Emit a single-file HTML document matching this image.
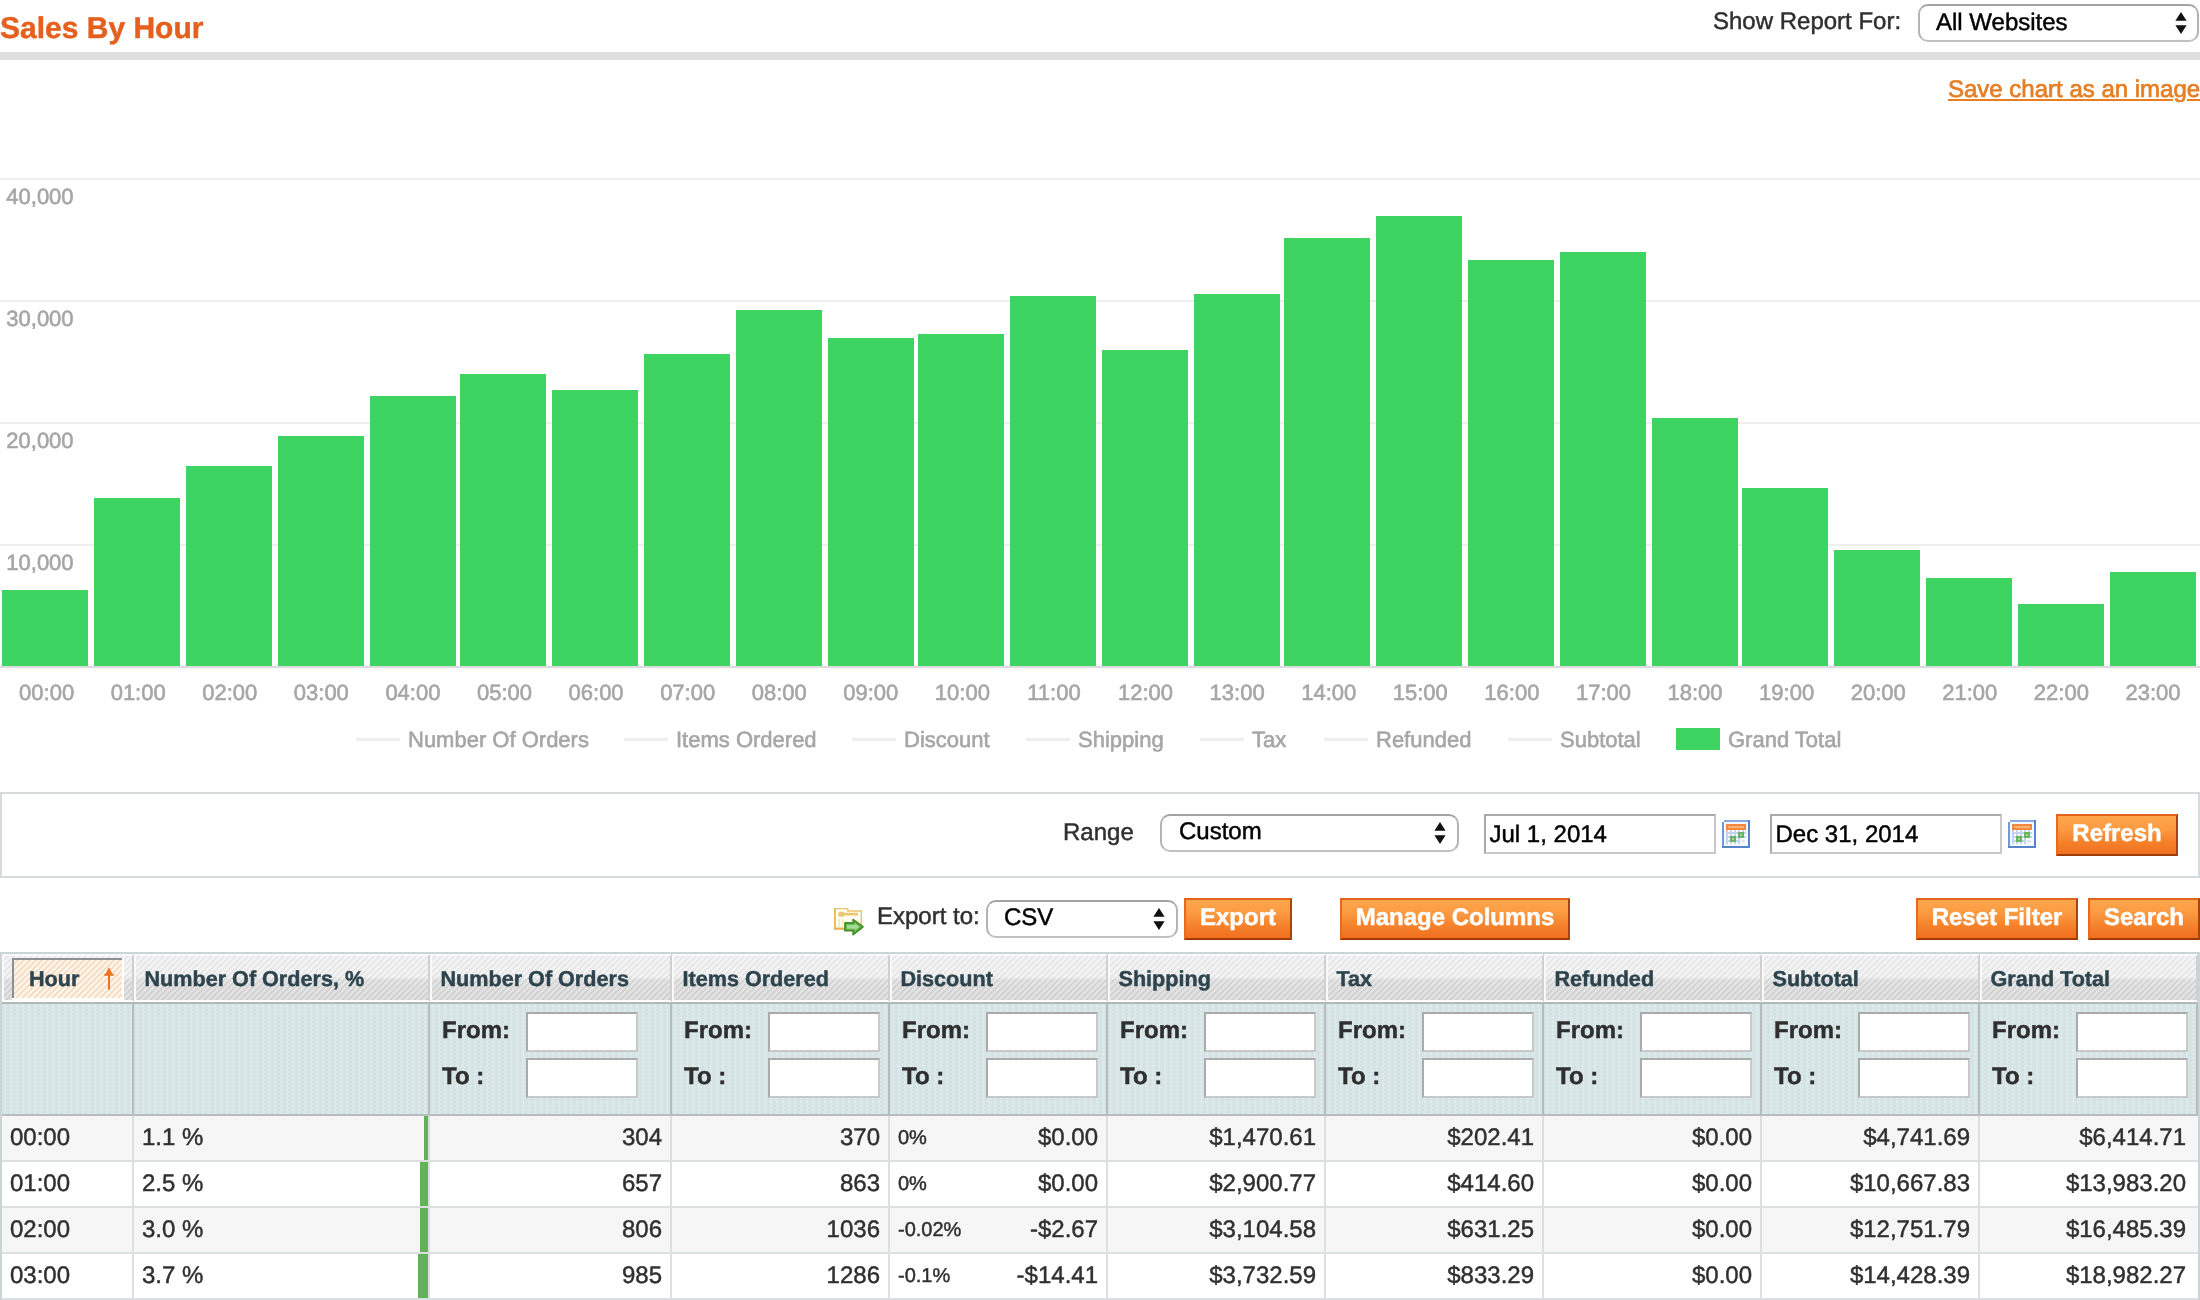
<!DOCTYPE html>
<html><head><meta charset="utf-8"><title>Sales By Hour</title><style>
html,body{margin:0;padding:0;background:#fff;}
body{width:2200px;height:1300px;position:relative;overflow:hidden;font-family:"Liberation Sans", sans-serif;will-change:transform;}
.b{position:absolute;box-sizing:border-box;}
.t{position:absolute;white-space:nowrap;font-family:"Liberation Sans", sans-serif;text-rendering:geometricPrecision;}
.sel{border:2px solid;border-color:#a3a3a3 #b3b3b3 #c1c1c1 #b3b3b3;border-radius:10px;background:#fff;}
.inp{border:2px solid;border-color:#aaa #c8c8c8 #c8c8c8 #aaa;background:#fff;}
.btn{border:2px solid;border-color:#e0651a #a8450c #9c3d06 #e96a1c;background:linear-gradient(#fea64d 0%,#fb9a41 35%,#f5802a 70%,#f16f1f 100%);}
.th{border:2px solid;border-color:#f9f9f9 #d1cfcf #ffffff #f9f9f9;
 background:
  linear-gradient(rgba(255,255,255,.3) 0,rgba(255,255,255,.3) 47%,rgba(0,0,0,.04) 55%,rgba(0,0,0,.06) 100%),
  repeating-linear-gradient(135deg,#efefef 0,#efefef 1.7px,#dddddd 2.3px,#dddddd 3.65px,#efefef 4.243px);}
.sorted{border:0;
 background:repeating-linear-gradient(135deg,#fff5e9 0,#fff5e9 1.7px,#f5ddc5 2.3px,#f5ddc5 3.65px,#fff5e9 4.243px);}
.fl{border:2px solid;border-color:#b2b8b8 #b7bdbd #b7bdbd #d9e7ea;border-left-width:0;background:radial-gradient(circle at 3px 2px,rgba(232,242,244,.55) 0,rgba(232,242,244,.55) 0.9px,transparent 1.5px) 0 0/6px 4px,repeating-linear-gradient(90deg,rgba(200,216,220,.28) 0,rgba(200,216,220,.28) 1px,transparent 1px,transparent 6px),#d7e5e7;}
.td{border-right:2px solid #dadfe0;border-bottom:2px solid #dadfe0;}
</style></head><body>
<svg width="0" height="0" style="position:absolute"><defs><filter id="soft" x="-10%" y="-10%" width="120%" height="120%"><feGaussianBlur stdDeviation="0.33"/></filter><filter id="soft2" x="-10%" y="-10%" width="120%" height="120%"><feGaussianBlur stdDeviation="0.55"/></filter></defs></svg>
<div class="t" style="left:0px;top:13.71px;font-size:30px;line-height:30px;color:#e5601e;-webkit-text-stroke:0.45px #e5601e;font-weight:bold;">Sales By Hour</div>
<div class="t" style="left:1713px;top:10.28px;font-size:24px;line-height:24px;color:#2f2f2f;-webkit-text-stroke:0.45px #2f2f2f;">Show Report For:</div>
<div class="b sel" style="left:1918px;top:4px;width:281px;height:38px;"></div>
<div class="t" style="left:1936px;top:10.68px;font-size:24px;line-height:24px;color:#000;-webkit-text-stroke:0.45px #000;">All Websites</div>
<svg class="b" style="left:2173.5px;top:11.0px" width="14" height="24" viewBox="0 0 14 24"><path d="M7 1 L12.6 9.8 L1.4 9.8 Z M7 23 L12.6 14.2 L1.4 14.2 Z" fill="#111"/></svg>
<div class="b" style="left:0px;top:52px;width:2200px;height:8px;background:#dfdfdf;"></div>
<div class="t" style="left:1948px;top:77.88px;font-size:24px;line-height:24px;color:#e67e24;-webkit-text-stroke:0.7px #e67e24;text-decoration:underline;text-decoration-thickness:2px;text-underline-offset:1.5px;">Save chart as an image</div>
<div class="b" style="left:0px;top:178px;width:2200px;height:2px;background:#eeeeee;"></div>
<div class="b" style="left:0px;top:300px;width:2200px;height:2px;background:#eeeeee;"></div>
<div class="b" style="left:0px;top:422px;width:2200px;height:2px;background:#eeeeee;"></div>
<div class="b" style="left:0px;top:544px;width:2200px;height:2px;background:#eeeeee;"></div>
<div class="t" style="left:6.3px;top:185.88px;font-size:22px;line-height:22px;color:#a6a6a6;-webkit-text-stroke:0.6px #a6a6a6;transform:scaleY(1.0);transform-origin:0 84.65%;">40,000</div>
<div class="t" style="left:6.3px;top:307.88px;font-size:22px;line-height:22px;color:#a6a6a6;-webkit-text-stroke:0.6px #a6a6a6;transform:scaleY(1.0);transform-origin:0 84.65%;">30,000</div>
<div class="t" style="left:6.3px;top:429.88px;font-size:22px;line-height:22px;color:#a6a6a6;-webkit-text-stroke:0.6px #a6a6a6;transform:scaleY(1.0);transform-origin:0 84.65%;">20,000</div>
<div class="t" style="left:6.3px;top:551.88px;font-size:22px;line-height:22px;color:#a6a6a6;-webkit-text-stroke:0.6px #a6a6a6;transform:scaleY(1.0);transform-origin:0 84.65%;">10,000</div>
<div class="b" style="left:2px;top:590px;width:86px;height:76px;background:#3dd461;"></div>
<div class="b" style="left:94px;top:498px;width:86px;height:168px;background:#3dd461;"></div>
<div class="b" style="left:186px;top:466px;width:86px;height:200px;background:#3dd461;"></div>
<div class="b" style="left:278px;top:436px;width:86px;height:230px;background:#3dd461;"></div>
<div class="b" style="left:370px;top:396px;width:86px;height:270px;background:#3dd461;"></div>
<div class="b" style="left:460px;top:374px;width:86px;height:292px;background:#3dd461;"></div>
<div class="b" style="left:552px;top:390px;width:86px;height:276px;background:#3dd461;"></div>
<div class="b" style="left:644px;top:354px;width:86px;height:312px;background:#3dd461;"></div>
<div class="b" style="left:736px;top:310px;width:86px;height:356px;background:#3dd461;"></div>
<div class="b" style="left:828px;top:338px;width:86px;height:328px;background:#3dd461;"></div>
<div class="b" style="left:918px;top:334px;width:86px;height:332px;background:#3dd461;"></div>
<div class="b" style="left:1010px;top:296px;width:86px;height:370px;background:#3dd461;"></div>
<div class="b" style="left:1102px;top:350px;width:86px;height:316px;background:#3dd461;"></div>
<div class="b" style="left:1194px;top:294px;width:86px;height:372px;background:#3dd461;"></div>
<div class="b" style="left:1284px;top:238px;width:86px;height:428px;background:#3dd461;"></div>
<div class="b" style="left:1376px;top:216px;width:86px;height:450px;background:#3dd461;"></div>
<div class="b" style="left:1468px;top:260px;width:86px;height:406px;background:#3dd461;"></div>
<div class="b" style="left:1560px;top:252px;width:86px;height:414px;background:#3dd461;"></div>
<div class="b" style="left:1652px;top:418px;width:86px;height:248px;background:#3dd461;"></div>
<div class="b" style="left:1742px;top:488px;width:86px;height:178px;background:#3dd461;"></div>
<div class="b" style="left:1834px;top:550px;width:86px;height:116px;background:#3dd461;"></div>
<div class="b" style="left:1926px;top:578px;width:86px;height:88px;background:#3dd461;"></div>
<div class="b" style="left:2018px;top:604px;width:86px;height:62px;background:#3dd461;"></div>
<div class="b" style="left:2110px;top:572px;width:86px;height:94px;background:#3dd461;"></div>
<div class="b" style="left:0px;top:666px;width:2200px;height:2px;background:#dcdcdc;"></div>
<div class="t" style="left:6.600000000000001px;top:682.38px;font-size:22px;line-height:22px;color:#a6a6a6;-webkit-text-stroke:0.6px #a6a6a6;width:80px;text-align:center;transform:scaleY(1.0);transform-origin:0 84.65%;">00:00</div>
<div class="t" style="left:98.18px;top:682.38px;font-size:22px;line-height:22px;color:#a6a6a6;-webkit-text-stroke:0.6px #a6a6a6;width:80px;text-align:center;transform:scaleY(1.0);transform-origin:0 84.65%;">01:00</div>
<div class="t" style="left:189.76px;top:682.38px;font-size:22px;line-height:22px;color:#a6a6a6;-webkit-text-stroke:0.6px #a6a6a6;width:80px;text-align:center;transform:scaleY(1.0);transform-origin:0 84.65%;">02:00</div>
<div class="t" style="left:281.34000000000003px;top:682.38px;font-size:22px;line-height:22px;color:#a6a6a6;-webkit-text-stroke:0.6px #a6a6a6;width:80px;text-align:center;transform:scaleY(1.0);transform-origin:0 84.65%;">03:00</div>
<div class="t" style="left:372.92px;top:682.38px;font-size:22px;line-height:22px;color:#a6a6a6;-webkit-text-stroke:0.6px #a6a6a6;width:80px;text-align:center;transform:scaleY(1.0);transform-origin:0 84.65%;">04:00</div>
<div class="t" style="left:464.5px;top:682.38px;font-size:22px;line-height:22px;color:#a6a6a6;-webkit-text-stroke:0.6px #a6a6a6;width:80px;text-align:center;transform:scaleY(1.0);transform-origin:0 84.65%;">05:00</div>
<div class="t" style="left:556.08px;top:682.38px;font-size:22px;line-height:22px;color:#a6a6a6;-webkit-text-stroke:0.6px #a6a6a6;width:80px;text-align:center;transform:scaleY(1.0);transform-origin:0 84.65%;">06:00</div>
<div class="t" style="left:647.66px;top:682.38px;font-size:22px;line-height:22px;color:#a6a6a6;-webkit-text-stroke:0.6px #a6a6a6;width:80px;text-align:center;transform:scaleY(1.0);transform-origin:0 84.65%;">07:00</div>
<div class="t" style="left:739.24px;top:682.38px;font-size:22px;line-height:22px;color:#a6a6a6;-webkit-text-stroke:0.6px #a6a6a6;width:80px;text-align:center;transform:scaleY(1.0);transform-origin:0 84.65%;">08:00</div>
<div class="t" style="left:830.82px;top:682.38px;font-size:22px;line-height:22px;color:#a6a6a6;-webkit-text-stroke:0.6px #a6a6a6;width:80px;text-align:center;transform:scaleY(1.0);transform-origin:0 84.65%;">09:00</div>
<div class="t" style="left:922.4px;top:682.38px;font-size:22px;line-height:22px;color:#a6a6a6;-webkit-text-stroke:0.6px #a6a6a6;width:80px;text-align:center;transform:scaleY(1.0);transform-origin:0 84.65%;">10:00</div>
<div class="t" style="left:1013.98px;top:682.38px;font-size:22px;line-height:22px;color:#a6a6a6;-webkit-text-stroke:0.6px #a6a6a6;width:80px;text-align:center;transform:scaleY(1.0);transform-origin:0 84.65%;">11:00</div>
<div class="t" style="left:1105.56px;top:682.38px;font-size:22px;line-height:22px;color:#a6a6a6;-webkit-text-stroke:0.6px #a6a6a6;width:80px;text-align:center;transform:scaleY(1.0);transform-origin:0 84.65%;">12:00</div>
<div class="t" style="left:1197.1399999999999px;top:682.38px;font-size:22px;line-height:22px;color:#a6a6a6;-webkit-text-stroke:0.6px #a6a6a6;width:80px;text-align:center;transform:scaleY(1.0);transform-origin:0 84.65%;">13:00</div>
<div class="t" style="left:1288.7199999999998px;top:682.38px;font-size:22px;line-height:22px;color:#a6a6a6;-webkit-text-stroke:0.6px #a6a6a6;width:80px;text-align:center;transform:scaleY(1.0);transform-origin:0 84.65%;">14:00</div>
<div class="t" style="left:1380.3px;top:682.38px;font-size:22px;line-height:22px;color:#a6a6a6;-webkit-text-stroke:0.6px #a6a6a6;width:80px;text-align:center;transform:scaleY(1.0);transform-origin:0 84.65%;">15:00</div>
<div class="t" style="left:1471.8799999999999px;top:682.38px;font-size:22px;line-height:22px;color:#a6a6a6;-webkit-text-stroke:0.6px #a6a6a6;width:80px;text-align:center;transform:scaleY(1.0);transform-origin:0 84.65%;">16:00</div>
<div class="t" style="left:1563.4599999999998px;top:682.38px;font-size:22px;line-height:22px;color:#a6a6a6;-webkit-text-stroke:0.6px #a6a6a6;width:80px;text-align:center;transform:scaleY(1.0);transform-origin:0 84.65%;">17:00</div>
<div class="t" style="left:1655.04px;top:682.38px;font-size:22px;line-height:22px;color:#a6a6a6;-webkit-text-stroke:0.6px #a6a6a6;width:80px;text-align:center;transform:scaleY(1.0);transform-origin:0 84.65%;">18:00</div>
<div class="t" style="left:1746.62px;top:682.38px;font-size:22px;line-height:22px;color:#a6a6a6;-webkit-text-stroke:0.6px #a6a6a6;width:80px;text-align:center;transform:scaleY(1.0);transform-origin:0 84.65%;">19:00</div>
<div class="t" style="left:1838.1999999999998px;top:682.38px;font-size:22px;line-height:22px;color:#a6a6a6;-webkit-text-stroke:0.6px #a6a6a6;width:80px;text-align:center;transform:scaleY(1.0);transform-origin:0 84.65%;">20:00</div>
<div class="t" style="left:1929.78px;top:682.38px;font-size:22px;line-height:22px;color:#a6a6a6;-webkit-text-stroke:0.6px #a6a6a6;width:80px;text-align:center;transform:scaleY(1.0);transform-origin:0 84.65%;">21:00</div>
<div class="t" style="left:2021.3600000000001px;top:682.38px;font-size:22px;line-height:22px;color:#a6a6a6;-webkit-text-stroke:0.6px #a6a6a6;width:80px;text-align:center;transform:scaleY(1.0);transform-origin:0 84.65%;">22:00</div>
<div class="t" style="left:2112.94px;top:682.38px;font-size:22px;line-height:22px;color:#a6a6a6;-webkit-text-stroke:0.6px #a6a6a6;width:80px;text-align:center;transform:scaleY(1.0);transform-origin:0 84.65%;">23:00</div>
<div class="b" style="left:356px;top:738px;width:44px;height:3px;background:#eeeeee;"></div>
<div class="t" style="left:408px;top:729.18px;font-size:22px;line-height:22px;color:#a6a6a6;-webkit-text-stroke:0.6px #a6a6a6;transform:scaleY(1.0);transform-origin:0 84.65%;">Number Of Orders</div>
<div class="b" style="left:624px;top:738px;width:44px;height:3px;background:#eeeeee;"></div>
<div class="t" style="left:676px;top:729.18px;font-size:22px;line-height:22px;color:#a6a6a6;-webkit-text-stroke:0.6px #a6a6a6;transform:scaleY(1.0);transform-origin:0 84.65%;">Items Ordered</div>
<div class="b" style="left:852px;top:738px;width:44px;height:3px;background:#eeeeee;"></div>
<div class="t" style="left:904px;top:729.18px;font-size:22px;line-height:22px;color:#a6a6a6;-webkit-text-stroke:0.6px #a6a6a6;transform:scaleY(1.0);transform-origin:0 84.65%;">Discount</div>
<div class="b" style="left:1026px;top:738px;width:44px;height:3px;background:#eeeeee;"></div>
<div class="t" style="left:1078px;top:729.18px;font-size:22px;line-height:22px;color:#a6a6a6;-webkit-text-stroke:0.6px #a6a6a6;transform:scaleY(1.0);transform-origin:0 84.65%;">Shipping</div>
<div class="b" style="left:1200px;top:738px;width:44px;height:3px;background:#eeeeee;"></div>
<div class="t" style="left:1252px;top:729.18px;font-size:22px;line-height:22px;color:#a6a6a6;-webkit-text-stroke:0.6px #a6a6a6;transform:scaleY(1.0);transform-origin:0 84.65%;">Tax</div>
<div class="b" style="left:1324px;top:738px;width:44px;height:3px;background:#eeeeee;"></div>
<div class="t" style="left:1376px;top:729.18px;font-size:22px;line-height:22px;color:#a6a6a6;-webkit-text-stroke:0.6px #a6a6a6;transform:scaleY(1.0);transform-origin:0 84.65%;">Refunded</div>
<div class="b" style="left:1508px;top:738px;width:44px;height:3px;background:#eeeeee;"></div>
<div class="t" style="left:1560px;top:729.18px;font-size:22px;line-height:22px;color:#a6a6a6;-webkit-text-stroke:0.6px #a6a6a6;transform:scaleY(1.0);transform-origin:0 84.65%;">Subtotal</div>
<div class="b" style="left:1676px;top:728px;width:44px;height:22px;background:#3dd461;"></div>
<div class="t" style="left:1728px;top:729.18px;font-size:22px;line-height:22px;color:#a6a6a6;-webkit-text-stroke:0.6px #a6a6a6;transform:scaleY(1.0);transform-origin:0 84.65%;">Grand Total</div>
<div class="b" style="left:0px;top:792px;width:2200px;height:86px;box-sizing:border-box;border:2px solid #d6dcdc;background:#fff;"></div>
<div class="t" style="left:1063px;top:820.88px;font-size:24px;line-height:24px;color:#2f2f2f;-webkit-text-stroke:0.45px #2f2f2f;">Range</div>
<div class="b sel" style="left:1160px;top:814px;width:299px;height:38px;"></div>
<div class="t" style="left:1179px;top:820.28px;font-size:24px;line-height:24px;color:#000;-webkit-text-stroke:0.45px #000;">Custom</div>
<svg class="b" style="left:1433.4px;top:821.0px" width="14" height="24" viewBox="0 0 14 24"><path d="M7 1 L12.6 9.8 L1.4 9.8 Z M7 23 L12.6 14.2 L1.4 14.2 Z" fill="#111"/></svg>
<div class="b inp" style="left:1484px;top:814px;width:232px;height:40px;"></div>
<div class="t" style="left:1489.5px;top:822.58px;font-size:24px;line-height:24px;color:#000;-webkit-text-stroke:0.45px #000;">Jul 1, 2014</div>
<div class="b inp" style="left:1770px;top:814px;width:232px;height:40px;"></div>
<div class="t" style="left:1775.5px;top:822.58px;font-size:24px;line-height:24px;color:#000;-webkit-text-stroke:0.45px #000;">Dec 31, 2014</div>
<svg class="b" style="left:1722px;top:820px" width="28" height="28" viewBox="0 0 14 14">
<g filter="url(#soft)">
<rect x="1" y="0" width="13" height="14" fill="#86abe0"/>
<rect x="0" y="1" width="14" height="13" fill="#6f9bdb"/>
<rect x="13" y="0" width="1" height="14" fill="#5a84c8"/>
<rect x="0" y="13" width="14" height="1" fill="#5885ca"/>
<rect x="1" y="1" width="12" height="12" fill="#f4f8fe"/>
<rect x="2" y="2" width="10" height="3" fill="#f4873c"/>
<rect x="3" y="3" width="8" height="1" fill="#fdb375"/>
<rect x="2" y="5" width="10" height="7" fill="#c2d4ef"/>
<g fill="#ffffff"><rect x="3" y="5" width="1" height="1"/><rect x="5" y="5" width="1" height="1"/><rect x="7" y="5" width="1" height="1"/><rect x="9" y="5" width="1" height="1"/><rect x="11" y="5" width="1" height="1"/>
<rect x="3" y="7" width="1" height="1"/><rect x="5" y="7" width="1" height="1"/><rect x="7" y="7" width="1" height="1"/><rect x="11" y="7" width="1" height="1"/>
<rect x="3" y="9" width="1" height="1"/><rect x="7" y="9" width="1" height="1"/><rect x="9" y="9" width="3" height="3"/>
<rect x="3" y="11" width="1" height="1"/><rect x="5" y="11" width="1" height="1"/><rect x="7" y="11" width="1" height="1"/></g>
<rect x="8" y="6" width="3" height="3" fill="#68b366"/><rect x="9" y="7" width="1" height="1" fill="#a2d89d"/>
<rect x="4" y="8" width="3" height="3" fill="#68b366"/><rect x="5" y="9" width="1" height="1" fill="#a2d89d"/>
<rect x="9.5" y="9.8" width="2" height="1.6" fill="#dfe6f3"/>
</g></svg>
<svg class="b" style="left:2008px;top:820px" width="28" height="28" viewBox="0 0 14 14">
<g filter="url(#soft)">
<rect x="1" y="0" width="13" height="14" fill="#86abe0"/>
<rect x="0" y="1" width="14" height="13" fill="#6f9bdb"/>
<rect x="13" y="0" width="1" height="14" fill="#5a84c8"/>
<rect x="0" y="13" width="14" height="1" fill="#5885ca"/>
<rect x="1" y="1" width="12" height="12" fill="#f4f8fe"/>
<rect x="2" y="2" width="10" height="3" fill="#f4873c"/>
<rect x="3" y="3" width="8" height="1" fill="#fdb375"/>
<rect x="2" y="5" width="10" height="7" fill="#c2d4ef"/>
<g fill="#ffffff"><rect x="3" y="5" width="1" height="1"/><rect x="5" y="5" width="1" height="1"/><rect x="7" y="5" width="1" height="1"/><rect x="9" y="5" width="1" height="1"/><rect x="11" y="5" width="1" height="1"/>
<rect x="3" y="7" width="1" height="1"/><rect x="5" y="7" width="1" height="1"/><rect x="7" y="7" width="1" height="1"/><rect x="11" y="7" width="1" height="1"/>
<rect x="3" y="9" width="1" height="1"/><rect x="7" y="9" width="1" height="1"/><rect x="9" y="9" width="3" height="3"/>
<rect x="3" y="11" width="1" height="1"/><rect x="5" y="11" width="1" height="1"/><rect x="7" y="11" width="1" height="1"/></g>
<rect x="8" y="6" width="3" height="3" fill="#68b366"/><rect x="9" y="7" width="1" height="1" fill="#a2d89d"/>
<rect x="4" y="8" width="3" height="3" fill="#68b366"/><rect x="5" y="9" width="1" height="1" fill="#a2d89d"/>
<rect x="9.5" y="9.8" width="2" height="1.6" fill="#dfe6f3"/>
</g></svg>
<div class="b btn" style="left:2056px;top:814px;width:122px;height:42px;"></div>
<div class="t" style="left:2056px;top:822.18px;font-size:24px;line-height:24px;color:#fff;-webkit-text-stroke:0.45px #fff;font-weight:bold;width:122px;text-align:center;">Refresh</div>
<svg class="b" style="left:832px;top:905px" width="34" height="34" viewBox="-1 -1 34 34">
<g filter="url(#soft2)">
<path d="M1.8 2.6 H14.8 V5 H28.3 V22.8 H1.8 Z" fill="#fffdf0" stroke="#ebc56e" stroke-width="1.4"/>
<rect x="1" y="2.4" width="1.7" height="21" fill="#e9b859"/>
<rect x="1" y="21.6" width="27.6" height="2" fill="#e8b052"/>
<rect x="5.5" y="6.8" width="19.5" height="2.6" fill="#ecc670"/>
<rect x="5.5" y="5.8" width="5.5" height="5" rx="1" fill="#ecc670"/>
<rect x="5.6" y="13" width="1.2" height="9" fill="#f3dfa3"/>
<rect x="9" y="13" width="1" height="9" fill="#f8ecc4"/>
<path d="M12 16.9 H20.2 V13.6 L29.9 20.8 L20.2 28.6 V24.7 H12 Z" fill="#68b855" stroke="#44902f" stroke-width="1.8" stroke-linejoin="round"/>
<path d="M14 19 H22 V17.6 L26.4 20.8 L22 24.2 V22.8 H14 Z" fill="#a3dc95"/>
</g></svg>
<div class="t" style="left:877px;top:905.38px;font-size:24px;line-height:24px;color:#2f2f2f;-webkit-text-stroke:0.45px #2f2f2f;">Export to:</div>
<div class="b sel" style="left:986px;top:900px;width:192px;height:38px;"></div>
<div class="t" style="left:1004px;top:906.08px;font-size:24px;line-height:24px;color:#000;-webkit-text-stroke:0.45px #000;">CSV</div>
<svg class="b" style="left:1151.6px;top:907.0px" width="14" height="24" viewBox="0 0 14 24"><path d="M7 1 L12.6 9.8 L1.4 9.8 Z M7 23 L12.6 14.2 L1.4 14.2 Z" fill="#111"/></svg>
<div class="b btn" style="left:1184px;top:898px;width:108px;height:42px;"></div>
<div class="t" style="left:1184px;top:906.28px;font-size:24px;line-height:24px;color:#fff;-webkit-text-stroke:0.45px #fff;font-weight:bold;width:108px;text-align:center;">Export</div>
<div class="b btn" style="left:1340px;top:898px;width:230px;height:42px;"></div>
<div class="t" style="left:1340px;top:906.28px;font-size:24px;line-height:24px;color:#fff;-webkit-text-stroke:0.45px #fff;font-weight:bold;width:230px;text-align:center;">Manage Columns</div>
<div class="b btn" style="left:1916px;top:898px;width:162px;height:42px;"></div>
<div class="t" style="left:1916px;top:906.28px;font-size:24px;line-height:24px;color:#fff;-webkit-text-stroke:0.45px #fff;font-weight:bold;width:162px;text-align:center;">Reset Filter</div>
<div class="b btn" style="left:2088px;top:898px;width:112px;height:42px;"></div>
<div class="t" style="left:2088px;top:906.28px;font-size:24px;line-height:24px;color:#fff;-webkit-text-stroke:0.45px #fff;font-weight:bold;width:112px;text-align:center;">Search</div>
<div class="b" style="left:0px;top:952px;width:2200px;height:348px;background:#ccd5d6;"></div>
<div class="b th" style="left:2px;top:954px;width:132px;height:48px;"></div>
<div class="b th" style="left:134px;top:954px;width:296px;height:48px;"></div>
<div class="t" style="left:144.5px;top:967.72px;font-size:21.6px;line-height:21.6px;color:#2d444f;-webkit-text-stroke:0.45px #2d444f;font-weight:bold;">Number Of Orders, %</div>
<div class="b th" style="left:430px;top:954px;width:242px;height:48px;"></div>
<div class="t" style="left:440.5px;top:967.72px;font-size:21.6px;line-height:21.6px;color:#2d444f;-webkit-text-stroke:0.45px #2d444f;font-weight:bold;">Number Of Orders</div>
<div class="b th" style="left:672px;top:954px;width:218px;height:48px;"></div>
<div class="t" style="left:682.5px;top:967.72px;font-size:21.6px;line-height:21.6px;color:#2d444f;-webkit-text-stroke:0.45px #2d444f;font-weight:bold;">Items Ordered</div>
<div class="b th" style="left:890px;top:954px;width:218px;height:48px;"></div>
<div class="t" style="left:900.5px;top:967.72px;font-size:21.6px;line-height:21.6px;color:#2d444f;-webkit-text-stroke:0.45px #2d444f;font-weight:bold;">Discount</div>
<div class="b th" style="left:1108px;top:954px;width:218px;height:48px;"></div>
<div class="t" style="left:1118.5px;top:967.72px;font-size:21.6px;line-height:21.6px;color:#2d444f;-webkit-text-stroke:0.45px #2d444f;font-weight:bold;">Shipping</div>
<div class="b th" style="left:1326px;top:954px;width:218px;height:48px;"></div>
<div class="t" style="left:1336.5px;top:967.72px;font-size:21.6px;line-height:21.6px;color:#2d444f;-webkit-text-stroke:0.45px #2d444f;font-weight:bold;">Tax</div>
<div class="b th" style="left:1544px;top:954px;width:218px;height:48px;"></div>
<div class="t" style="left:1554.5px;top:967.72px;font-size:21.6px;line-height:21.6px;color:#2d444f;-webkit-text-stroke:0.45px #2d444f;font-weight:bold;">Refunded</div>
<div class="b th" style="left:1762px;top:954px;width:218px;height:48px;"></div>
<div class="t" style="left:1772.5px;top:967.72px;font-size:21.6px;line-height:21.6px;color:#2d444f;-webkit-text-stroke:0.45px #2d444f;font-weight:bold;">Subtotal</div>
<div class="b th" style="left:1980px;top:954px;width:218px;height:48px;"></div>
<div class="t" style="left:1990.5px;top:967.72px;font-size:21.6px;line-height:21.6px;color:#2d444f;-webkit-text-stroke:0.45px #2d444f;font-weight:bold;">Grand Total</div>
<div class="b" style="left:12px;top:958px;width:112px;height:42px;background:#fff;"></div>
<div class="b" style="left:12px;top:958px;width:110px;height:40px;background:#8e9090;"></div>
<div class="b sorted" style="left:14px;top:960px;width:108px;height:38px;"></div>
<div class="t" style="left:29px;top:967.72px;font-size:21.6px;line-height:21.6px;color:#2d444f;-webkit-text-stroke:0.45px #2d444f;font-weight:bold;">Hour</div>
<svg class="b" style="left:103px;top:967px" width="12" height="24" viewBox="0 0 12 24"><path d="M5.9 0.3 L9.5 7 L10.8 7 L10.8 8.8 L7 8.8 L7 22.8 L5 22.8 L5 8.8 L1.2 8.8 L1.2 7 L2.5 7 Z" fill="#f2711c"/></svg>
<div class="b fl" style="left:2px;top:1002px;width:132px;height:114px;"></div>
<div class="b fl" style="left:134px;top:1002px;width:296px;height:114px;"></div>
<div class="b fl" style="left:430px;top:1002px;width:242px;height:114px;"></div>
<div class="t" style="left:442px;top:1018.68px;font-size:24px;line-height:24px;color:#2f2f2f;-webkit-text-stroke:0.45px #2f2f2f;font-weight:bold;">From:</div>
<div class="t" style="left:442px;top:1064.68px;font-size:24px;line-height:24px;color:#2f2f2f;-webkit-text-stroke:0.45px #2f2f2f;font-weight:bold;">To :</div>
<div class="b inp" style="left:526px;top:1012px;width:112px;height:40px;"></div>
<div class="b inp" style="left:526px;top:1058px;width:112px;height:40px;"></div>
<div class="b fl" style="left:672px;top:1002px;width:218px;height:114px;"></div>
<div class="t" style="left:684px;top:1018.68px;font-size:24px;line-height:24px;color:#2f2f2f;-webkit-text-stroke:0.45px #2f2f2f;font-weight:bold;">From:</div>
<div class="t" style="left:684px;top:1064.68px;font-size:24px;line-height:24px;color:#2f2f2f;-webkit-text-stroke:0.45px #2f2f2f;font-weight:bold;">To :</div>
<div class="b inp" style="left:768px;top:1012px;width:112px;height:40px;"></div>
<div class="b inp" style="left:768px;top:1058px;width:112px;height:40px;"></div>
<div class="b fl" style="left:890px;top:1002px;width:218px;height:114px;"></div>
<div class="t" style="left:902px;top:1018.68px;font-size:24px;line-height:24px;color:#2f2f2f;-webkit-text-stroke:0.45px #2f2f2f;font-weight:bold;">From:</div>
<div class="t" style="left:902px;top:1064.68px;font-size:24px;line-height:24px;color:#2f2f2f;-webkit-text-stroke:0.45px #2f2f2f;font-weight:bold;">To :</div>
<div class="b inp" style="left:986px;top:1012px;width:112px;height:40px;"></div>
<div class="b inp" style="left:986px;top:1058px;width:112px;height:40px;"></div>
<div class="b fl" style="left:1108px;top:1002px;width:218px;height:114px;"></div>
<div class="t" style="left:1120px;top:1018.68px;font-size:24px;line-height:24px;color:#2f2f2f;-webkit-text-stroke:0.45px #2f2f2f;font-weight:bold;">From:</div>
<div class="t" style="left:1120px;top:1064.68px;font-size:24px;line-height:24px;color:#2f2f2f;-webkit-text-stroke:0.45px #2f2f2f;font-weight:bold;">To :</div>
<div class="b inp" style="left:1204px;top:1012px;width:112px;height:40px;"></div>
<div class="b inp" style="left:1204px;top:1058px;width:112px;height:40px;"></div>
<div class="b fl" style="left:1326px;top:1002px;width:218px;height:114px;"></div>
<div class="t" style="left:1338px;top:1018.68px;font-size:24px;line-height:24px;color:#2f2f2f;-webkit-text-stroke:0.45px #2f2f2f;font-weight:bold;">From:</div>
<div class="t" style="left:1338px;top:1064.68px;font-size:24px;line-height:24px;color:#2f2f2f;-webkit-text-stroke:0.45px #2f2f2f;font-weight:bold;">To :</div>
<div class="b inp" style="left:1422px;top:1012px;width:112px;height:40px;"></div>
<div class="b inp" style="left:1422px;top:1058px;width:112px;height:40px;"></div>
<div class="b fl" style="left:1544px;top:1002px;width:218px;height:114px;"></div>
<div class="t" style="left:1556px;top:1018.68px;font-size:24px;line-height:24px;color:#2f2f2f;-webkit-text-stroke:0.45px #2f2f2f;font-weight:bold;">From:</div>
<div class="t" style="left:1556px;top:1064.68px;font-size:24px;line-height:24px;color:#2f2f2f;-webkit-text-stroke:0.45px #2f2f2f;font-weight:bold;">To :</div>
<div class="b inp" style="left:1640px;top:1012px;width:112px;height:40px;"></div>
<div class="b inp" style="left:1640px;top:1058px;width:112px;height:40px;"></div>
<div class="b fl" style="left:1762px;top:1002px;width:218px;height:114px;"></div>
<div class="t" style="left:1774px;top:1018.68px;font-size:24px;line-height:24px;color:#2f2f2f;-webkit-text-stroke:0.45px #2f2f2f;font-weight:bold;">From:</div>
<div class="t" style="left:1774px;top:1064.68px;font-size:24px;line-height:24px;color:#2f2f2f;-webkit-text-stroke:0.45px #2f2f2f;font-weight:bold;">To :</div>
<div class="b inp" style="left:1858px;top:1012px;width:112px;height:40px;"></div>
<div class="b inp" style="left:1858px;top:1058px;width:112px;height:40px;"></div>
<div class="b fl" style="left:1980px;top:1002px;width:218px;height:114px;"></div>
<div class="t" style="left:1992px;top:1018.68px;font-size:24px;line-height:24px;color:#2f2f2f;-webkit-text-stroke:0.45px #2f2f2f;font-weight:bold;">From:</div>
<div class="t" style="left:1992px;top:1064.68px;font-size:24px;line-height:24px;color:#2f2f2f;-webkit-text-stroke:0.45px #2f2f2f;font-weight:bold;">To :</div>
<div class="b inp" style="left:2076px;top:1012px;width:112px;height:40px;"></div>
<div class="b inp" style="left:2076px;top:1058px;width:112px;height:40px;"></div>
<div class="b td" style="left:2px;top:1116px;width:132px;height:46px;background:#f6f6f6;"></div>
<div class="t" style="left:10px;top:1126.28px;font-size:24px;line-height:24px;color:#2f2f2f;-webkit-text-stroke:0.45px #2f2f2f;">00:00</div>
<div class="b td" style="left:134px;top:1116px;width:296px;height:46px;background:#f6f6f6;"></div>
<div class="t" style="left:142px;top:1126.28px;font-size:24px;line-height:24px;color:#2f2f2f;-webkit-text-stroke:0.45px #2f2f2f;">1.1 %</div>
<div class="b td" style="left:430px;top:1116px;width:242px;height:46px;background:#f6f6f6;"></div>
<div class="t" style="left:430px;top:1126.28px;font-size:24px;line-height:24px;color:#2f2f2f;-webkit-text-stroke:0.45px #2f2f2f;width:232px;text-align:right;">304</div>
<div class="b td" style="left:672px;top:1116px;width:218px;height:46px;background:#f6f6f6;"></div>
<div class="t" style="left:672px;top:1126.28px;font-size:24px;line-height:24px;color:#2f2f2f;-webkit-text-stroke:0.45px #2f2f2f;width:208px;text-align:right;">370</div>
<div class="b td" style="left:890px;top:1116px;width:218px;height:46px;background:#f6f6f6;"></div>
<div class="t" style="left:898px;top:1127.67px;font-size:20px;line-height:20px;color:#2f2f2f;-webkit-text-stroke:0.45px #2f2f2f;">0%</div>
<div class="t" style="left:890px;top:1126.28px;font-size:24px;line-height:24px;color:#2f2f2f;-webkit-text-stroke:0.45px #2f2f2f;width:208px;text-align:right;">$0.00</div>
<div class="b td" style="left:1108px;top:1116px;width:218px;height:46px;background:#f6f6f6;"></div>
<div class="t" style="left:1108px;top:1126.28px;font-size:24px;line-height:24px;color:#2f2f2f;-webkit-text-stroke:0.45px #2f2f2f;width:208px;text-align:right;">$1,470.61</div>
<div class="b td" style="left:1326px;top:1116px;width:218px;height:46px;background:#f6f6f6;"></div>
<div class="t" style="left:1326px;top:1126.28px;font-size:24px;line-height:24px;color:#2f2f2f;-webkit-text-stroke:0.45px #2f2f2f;width:208px;text-align:right;">$202.41</div>
<div class="b td" style="left:1544px;top:1116px;width:218px;height:46px;background:#f6f6f6;"></div>
<div class="t" style="left:1544px;top:1126.28px;font-size:24px;line-height:24px;color:#2f2f2f;-webkit-text-stroke:0.45px #2f2f2f;width:208px;text-align:right;">$0.00</div>
<div class="b td" style="left:1762px;top:1116px;width:218px;height:46px;background:#f6f6f6;"></div>
<div class="t" style="left:1762px;top:1126.28px;font-size:24px;line-height:24px;color:#2f2f2f;-webkit-text-stroke:0.45px #2f2f2f;width:208px;text-align:right;">$4,741.69</div>
<div class="b td" style="left:1980px;top:1116px;width:218px;height:46px;background:#f6f6f6;border-right:0;"></div>
<div class="t" style="left:1980px;top:1126.28px;font-size:24px;line-height:24px;color:#2f2f2f;-webkit-text-stroke:0.45px #2f2f2f;width:206px;text-align:right;">$6,414.71</div>
<div class="b" style="left:424px;top:1116px;width:4px;height:44px;background:#62b15b;"></div>
<div class="b td" style="left:2px;top:1162px;width:132px;height:46px;background:#ffffff;"></div>
<div class="t" style="left:10px;top:1172.28px;font-size:24px;line-height:24px;color:#2f2f2f;-webkit-text-stroke:0.45px #2f2f2f;">01:00</div>
<div class="b td" style="left:134px;top:1162px;width:296px;height:46px;background:#ffffff;"></div>
<div class="t" style="left:142px;top:1172.28px;font-size:24px;line-height:24px;color:#2f2f2f;-webkit-text-stroke:0.45px #2f2f2f;">2.5 %</div>
<div class="b td" style="left:430px;top:1162px;width:242px;height:46px;background:#ffffff;"></div>
<div class="t" style="left:430px;top:1172.28px;font-size:24px;line-height:24px;color:#2f2f2f;-webkit-text-stroke:0.45px #2f2f2f;width:232px;text-align:right;">657</div>
<div class="b td" style="left:672px;top:1162px;width:218px;height:46px;background:#ffffff;"></div>
<div class="t" style="left:672px;top:1172.28px;font-size:24px;line-height:24px;color:#2f2f2f;-webkit-text-stroke:0.45px #2f2f2f;width:208px;text-align:right;">863</div>
<div class="b td" style="left:890px;top:1162px;width:218px;height:46px;background:#ffffff;"></div>
<div class="t" style="left:898px;top:1173.67px;font-size:20px;line-height:20px;color:#2f2f2f;-webkit-text-stroke:0.45px #2f2f2f;">0%</div>
<div class="t" style="left:890px;top:1172.28px;font-size:24px;line-height:24px;color:#2f2f2f;-webkit-text-stroke:0.45px #2f2f2f;width:208px;text-align:right;">$0.00</div>
<div class="b td" style="left:1108px;top:1162px;width:218px;height:46px;background:#ffffff;"></div>
<div class="t" style="left:1108px;top:1172.28px;font-size:24px;line-height:24px;color:#2f2f2f;-webkit-text-stroke:0.45px #2f2f2f;width:208px;text-align:right;">$2,900.77</div>
<div class="b td" style="left:1326px;top:1162px;width:218px;height:46px;background:#ffffff;"></div>
<div class="t" style="left:1326px;top:1172.28px;font-size:24px;line-height:24px;color:#2f2f2f;-webkit-text-stroke:0.45px #2f2f2f;width:208px;text-align:right;">$414.60</div>
<div class="b td" style="left:1544px;top:1162px;width:218px;height:46px;background:#ffffff;"></div>
<div class="t" style="left:1544px;top:1172.28px;font-size:24px;line-height:24px;color:#2f2f2f;-webkit-text-stroke:0.45px #2f2f2f;width:208px;text-align:right;">$0.00</div>
<div class="b td" style="left:1762px;top:1162px;width:218px;height:46px;background:#ffffff;"></div>
<div class="t" style="left:1762px;top:1172.28px;font-size:24px;line-height:24px;color:#2f2f2f;-webkit-text-stroke:0.45px #2f2f2f;width:208px;text-align:right;">$10,667.83</div>
<div class="b td" style="left:1980px;top:1162px;width:218px;height:46px;background:#ffffff;border-right:0;"></div>
<div class="t" style="left:1980px;top:1172.28px;font-size:24px;line-height:24px;color:#2f2f2f;-webkit-text-stroke:0.45px #2f2f2f;width:206px;text-align:right;">$13,983.20</div>
<div class="b" style="left:420px;top:1162px;width:8px;height:44px;background:#62b15b;"></div>
<div class="b td" style="left:2px;top:1208px;width:132px;height:46px;background:#f6f6f6;"></div>
<div class="t" style="left:10px;top:1218.28px;font-size:24px;line-height:24px;color:#2f2f2f;-webkit-text-stroke:0.45px #2f2f2f;">02:00</div>
<div class="b td" style="left:134px;top:1208px;width:296px;height:46px;background:#f6f6f6;"></div>
<div class="t" style="left:142px;top:1218.28px;font-size:24px;line-height:24px;color:#2f2f2f;-webkit-text-stroke:0.45px #2f2f2f;">3.0 %</div>
<div class="b td" style="left:430px;top:1208px;width:242px;height:46px;background:#f6f6f6;"></div>
<div class="t" style="left:430px;top:1218.28px;font-size:24px;line-height:24px;color:#2f2f2f;-webkit-text-stroke:0.45px #2f2f2f;width:232px;text-align:right;">806</div>
<div class="b td" style="left:672px;top:1208px;width:218px;height:46px;background:#f6f6f6;"></div>
<div class="t" style="left:672px;top:1218.28px;font-size:24px;line-height:24px;color:#2f2f2f;-webkit-text-stroke:0.45px #2f2f2f;width:208px;text-align:right;">1036</div>
<div class="b td" style="left:890px;top:1208px;width:218px;height:46px;background:#f6f6f6;"></div>
<div class="t" style="left:898px;top:1219.67px;font-size:20px;line-height:20px;color:#2f2f2f;-webkit-text-stroke:0.45px #2f2f2f;">-0.02%</div>
<div class="t" style="left:890px;top:1218.28px;font-size:24px;line-height:24px;color:#2f2f2f;-webkit-text-stroke:0.45px #2f2f2f;width:208px;text-align:right;">-$2.67</div>
<div class="b td" style="left:1108px;top:1208px;width:218px;height:46px;background:#f6f6f6;"></div>
<div class="t" style="left:1108px;top:1218.28px;font-size:24px;line-height:24px;color:#2f2f2f;-webkit-text-stroke:0.45px #2f2f2f;width:208px;text-align:right;">$3,104.58</div>
<div class="b td" style="left:1326px;top:1208px;width:218px;height:46px;background:#f6f6f6;"></div>
<div class="t" style="left:1326px;top:1218.28px;font-size:24px;line-height:24px;color:#2f2f2f;-webkit-text-stroke:0.45px #2f2f2f;width:208px;text-align:right;">$631.25</div>
<div class="b td" style="left:1544px;top:1208px;width:218px;height:46px;background:#f6f6f6;"></div>
<div class="t" style="left:1544px;top:1218.28px;font-size:24px;line-height:24px;color:#2f2f2f;-webkit-text-stroke:0.45px #2f2f2f;width:208px;text-align:right;">$0.00</div>
<div class="b td" style="left:1762px;top:1208px;width:218px;height:46px;background:#f6f6f6;"></div>
<div class="t" style="left:1762px;top:1218.28px;font-size:24px;line-height:24px;color:#2f2f2f;-webkit-text-stroke:0.45px #2f2f2f;width:208px;text-align:right;">$12,751.79</div>
<div class="b td" style="left:1980px;top:1208px;width:218px;height:46px;background:#f6f6f6;border-right:0;"></div>
<div class="t" style="left:1980px;top:1218.28px;font-size:24px;line-height:24px;color:#2f2f2f;-webkit-text-stroke:0.45px #2f2f2f;width:206px;text-align:right;">$16,485.39</div>
<div class="b" style="left:420px;top:1208px;width:8px;height:44px;background:#62b15b;"></div>
<div class="b td" style="left:2px;top:1254px;width:132px;height:46px;background:#ffffff;"></div>
<div class="t" style="left:10px;top:1264.28px;font-size:24px;line-height:24px;color:#2f2f2f;-webkit-text-stroke:0.45px #2f2f2f;">03:00</div>
<div class="b td" style="left:134px;top:1254px;width:296px;height:46px;background:#ffffff;"></div>
<div class="t" style="left:142px;top:1264.28px;font-size:24px;line-height:24px;color:#2f2f2f;-webkit-text-stroke:0.45px #2f2f2f;">3.7 %</div>
<div class="b td" style="left:430px;top:1254px;width:242px;height:46px;background:#ffffff;"></div>
<div class="t" style="left:430px;top:1264.28px;font-size:24px;line-height:24px;color:#2f2f2f;-webkit-text-stroke:0.45px #2f2f2f;width:232px;text-align:right;">985</div>
<div class="b td" style="left:672px;top:1254px;width:218px;height:46px;background:#ffffff;"></div>
<div class="t" style="left:672px;top:1264.28px;font-size:24px;line-height:24px;color:#2f2f2f;-webkit-text-stroke:0.45px #2f2f2f;width:208px;text-align:right;">1286</div>
<div class="b td" style="left:890px;top:1254px;width:218px;height:46px;background:#ffffff;"></div>
<div class="t" style="left:898px;top:1265.67px;font-size:20px;line-height:20px;color:#2f2f2f;-webkit-text-stroke:0.45px #2f2f2f;">-0.1%</div>
<div class="t" style="left:890px;top:1264.28px;font-size:24px;line-height:24px;color:#2f2f2f;-webkit-text-stroke:0.45px #2f2f2f;width:208px;text-align:right;">-$14.41</div>
<div class="b td" style="left:1108px;top:1254px;width:218px;height:46px;background:#ffffff;"></div>
<div class="t" style="left:1108px;top:1264.28px;font-size:24px;line-height:24px;color:#2f2f2f;-webkit-text-stroke:0.45px #2f2f2f;width:208px;text-align:right;">$3,732.59</div>
<div class="b td" style="left:1326px;top:1254px;width:218px;height:46px;background:#ffffff;"></div>
<div class="t" style="left:1326px;top:1264.28px;font-size:24px;line-height:24px;color:#2f2f2f;-webkit-text-stroke:0.45px #2f2f2f;width:208px;text-align:right;">$833.29</div>
<div class="b td" style="left:1544px;top:1254px;width:218px;height:46px;background:#ffffff;"></div>
<div class="t" style="left:1544px;top:1264.28px;font-size:24px;line-height:24px;color:#2f2f2f;-webkit-text-stroke:0.45px #2f2f2f;width:208px;text-align:right;">$0.00</div>
<div class="b td" style="left:1762px;top:1254px;width:218px;height:46px;background:#ffffff;"></div>
<div class="t" style="left:1762px;top:1264.28px;font-size:24px;line-height:24px;color:#2f2f2f;-webkit-text-stroke:0.45px #2f2f2f;width:208px;text-align:right;">$14,428.39</div>
<div class="b td" style="left:1980px;top:1254px;width:218px;height:46px;background:#ffffff;border-right:0;"></div>
<div class="t" style="left:1980px;top:1264.28px;font-size:24px;line-height:24px;color:#2f2f2f;-webkit-text-stroke:0.45px #2f2f2f;width:206px;text-align:right;">$18,982.27</div>
<div class="b" style="left:418px;top:1254px;width:10px;height:44px;background:#62b15b;"></div>
</body></html>
